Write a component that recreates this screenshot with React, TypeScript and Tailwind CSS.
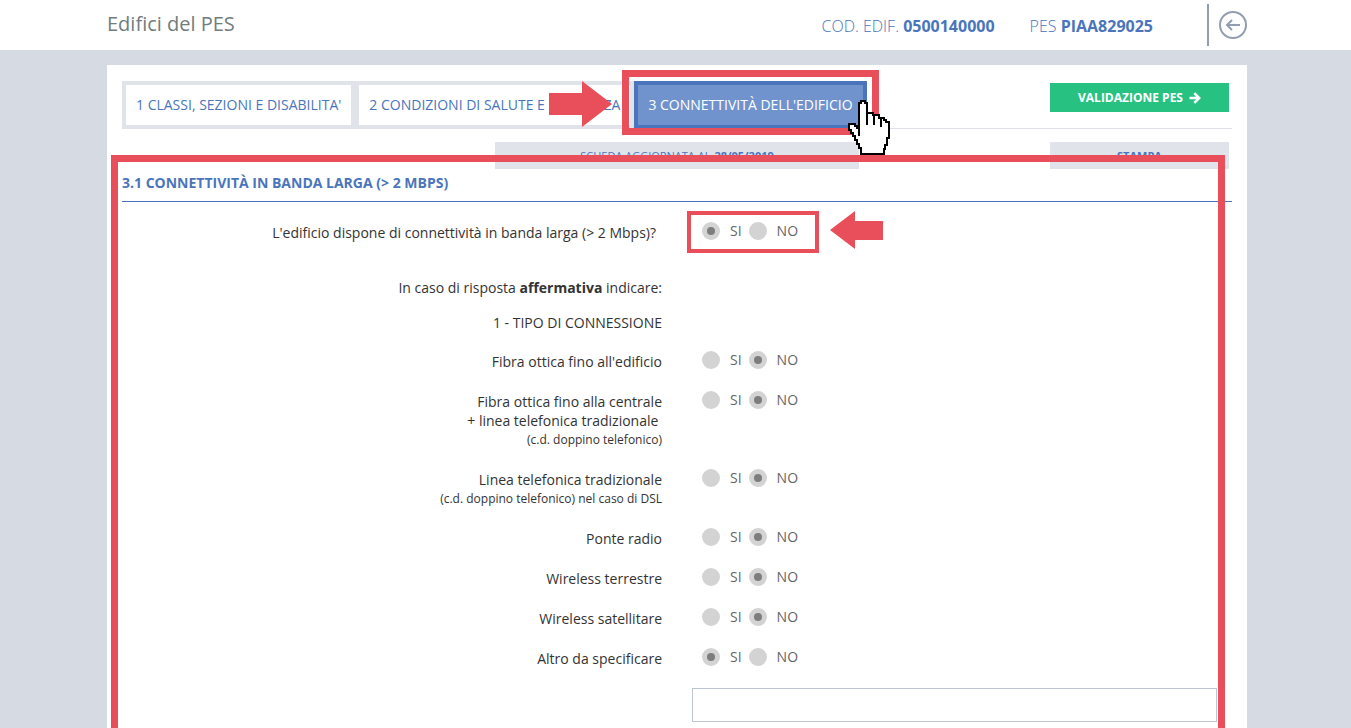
import { useState } from 'react';
import type { ReactNode } from 'react';

type Answer = 'SI' | 'NO';

interface Question {
  id: string;
  label: ReactNode;
  initial: Answer;
}

const connectionTypes: Question[] = [
  { id: 'fibra-edificio', label: "Fibra ottica fino all'edificio", initial: 'NO' },
  {
    id: 'fibra-centrale',
    label: (
      <>
        Fibra ottica fino alla centrale
        <br />+ linea telefonica tradizionale&nbsp;
        <span className="block text-xs leading-[19px]">(c.d. doppino telefonico)</span>
      </>
    ),
    initial: 'NO',
  },
  {
    id: 'linea-telefonica',
    label: (
      <>
        Linea telefonica tradizionale
        <span className="block text-xs leading-[19px]">(c.d. doppino telefonico) nel caso di DSL</span>
      </>
    ),
    initial: 'NO',
  },
  { id: 'ponte-radio', label: 'Ponte radio', initial: 'NO' },
  { id: 'wireless-terrestre', label: 'Wireless terrestre', initial: 'NO' },
  { id: 'wireless-satellitare', label: 'Wireless satellitare', initial: 'NO' },
  { id: 'altro', label: 'Altro da specificare', initial: 'SI' },
];

function YesNo({ id, initial }: { id: string; initial: Answer }) {
  const [value, setValue] = useState<Answer>(initial);

  return (
    <div role="radiogroup" aria-labelledby={`${id}-label`} className="flex h-[18px] items-center pl-2.5">
      {(['SI', 'NO'] as Answer[]).map((option) => (
        <label key={option} className="mr-[7px] flex items-center gap-2.5 text-sm leading-[18px] text-[#666]">
          <input
            type="radio"
            name={id}
            value={option}
            checked={value === option}
            onChange={() => setValue(option)}
            className="h-[18px] w-[18px] appearance-none rounded-full border-[5px] border-[#d3d3d3] bg-[#d3d3d3] checked:bg-[#7d7d7d]"
          />
          {option}
        </label>
      ))}
    </div>
  );
}

function QuestionRow({ question, highlighted }: { question: Question; highlighted?: boolean }) {
  return (
    <div className="grid grid-cols-2 py-2.5">
      <div
        id={`${question.id}-label`}
        className={`pt-px text-right text-sm leading-[19px] ${highlighted ? 'pr-[21px]' : 'pr-[15px]'}`}
      >
        {question.label}
      </div>
      <div className="pl-[15px]">
        <div className="relative w-fit">
          <YesNo id={question.id} initial={question.initial} />
          {highlighted && (
            <>
              <div className="pointer-events-none absolute -top-[11px] -left-[5px] h-[42px] w-[132px] border-4 border-[#e84f5b]" />
              <svg
                viewBox="0 0 53 38"
                className="pointer-events-none absolute -top-[11px] left-[138px] h-[38px] w-[53px] fill-[#e84f5b]"
              >
                <path d="M0 19L25 0V10H53V29H25V38Z" />
              </svg>
            </>
          )}
        </div>
      </div>
    </div>
  );
}

function HandPointer() {
  return (
    <svg
      viewBox="0 0 43 55"
      fill="none"
      stroke="#000"
      strokeWidth="2.2"
      shapeRendering="crispEdges"
      className="pointer-events-none absolute top-[19px] -right-6 z-20 h-[55px] w-[43px]"
    >
      <path
        fill="#fff"
        d="M12 3H13V1H17V3H19V13H25V15H31V18H36V20H38V22H41V38H39V45H37V49H36V54H13V48H11V44H9V40H7V36H5V33H3V30H1V24H7V26H9V28H11V3Z"
      />
      <path d="M19 13V25M26 15V25M33 18V27M11 26V36" />
    </svg>
  );
}

export default function App() {
  const [other, setOther] = useState('');

  return (
    <div className="flex min-h-screen flex-col overflow-hidden bg-[#d6dae3] font-['Open_Sans',sans-serif] text-[#333]">
      <header className="bg-white pl-[3px]">
        <div className="mx-auto flex h-[50px] w-full max-w-[1140px] items-center justify-between">
          <h1 className="pb-0.5 text-xl text-[#717d7d]">Edifici del PES</h1>
          <div className="flex items-center text-[#4a75bc]">
            <p className="mr-[35px] pt-0.5 text-base font-light">
              COD. EDIF. <strong className="font-bold">0500140000</strong>
            </p>
            <p className="mr-[54px] pt-0.5 text-base font-light">
              PES <strong className="font-bold">PIAA829025</strong>
            </p>
            <a href="#indietro" aria-label="Indietro" className="flex h-[42px] items-center border-l-2 border-[#939db0] pl-2.5">
              <svg viewBox="0 0 28 28" fill="none" stroke="#939db0" strokeWidth="2" className="h-7 w-7">
                <circle cx="14" cy="14" r="13" />
                <path d="M21 14H8M13 9L8 14L13 19" />
              </svg>
            </a>
          </div>
        </div>
      </header>

      <div className="flex flex-1 flex-col pt-[15px] pl-[3px]">
        <main className="relative mx-auto w-full max-w-[1140px] flex-1 bg-white pt-4">
          <div className="mx-[15px] flex h-12 items-start justify-between border-b border-[#dcdfe9]">
            <nav className="flex h-12 text-sm whitespace-nowrap text-[#4a75bc]">
              <a href="#classi" className="flex items-center border-4 border-[#e0e4ea] bg-white px-2.5">
                1 CLASSI, SEZIONI E DISABILITA'
              </a>
              <a href="#condizioni" className="flex items-center border-4 border-[#e0e4ea] bg-white px-2.5">
                2 CONDIZIONI DI SALUTE E SICUREZZA
              </a>
              <div className="relative flex">
                <a
                  href="#connettivita"
                  aria-current="page"
                  className="flex items-center border-4 border-[#4a75bc] bg-[#7093cd] px-2.5 text-white"
                >
                  3 CONNETTIVITÀ DELL'EDIFICIO
                </a>
                <div className="pointer-events-none absolute -top-[11px] -right-3 -bottom-[6px] -left-3 border-[7px] border-[#e84f5b]" />
                <svg
                  viewBox="0 0 63 46"
                  className="pointer-events-none absolute top-0 -left-[85px] h-[46px] w-[63px] fill-[#e84f5b]"
                >
                  <path d="M63 23L33 0V12H0V34H33V46Z" />
                </svg>
                <HandPointer />
              </div>
            </nav>
            <button
              type="button"
              className="mt-0.5 mr-[3px] flex h-[29px] w-[179px] items-center justify-center gap-1.5 bg-[#27c282] text-xs font-bold text-white"
            >
              VALIDAZIONE PES
              <svg viewBox="0 0 12 12" fill="none" stroke="currentColor" strokeWidth="2.6" className="h-3 w-3">
                <path d="M0.500 6H10M5.300 1.200L10.100 6L5.300 10.800" />
              </svg>
            </button>
          </div>

          <div className="mx-[15px] mt-[13px] grid grid-cols-[1fr_364px_1fr] text-[11px] text-[#4a75bc]">
            <p className="col-start-2 flex h-[27px] items-center justify-center gap-1 bg-[#e0e4ea] pt-0.5">
              SCHEDA AGGIORNATA AL <strong>28/05/2019</strong>
            </p>
            <button type="button" className="mr-[3px] h-[27px] w-[179px] justify-self-end bg-[#e0e4ea] pt-0.5 font-bold">
              STAMPA
            </button>
          </div>

          <section>
            <h2 className="mx-[15px] mt-1 border-b border-[#4a75bc] pb-2 text-sm font-bold text-[#4a75bc]">
              3.1 CONNETTIVITÀ IN BANDA LARGA (&gt; 2 MBPS)
            </h2>

            <form className="pt-2.5">
              <QuestionRow
                highlighted
                question={{
                  id: 'banda-larga',
                  label: "L'edificio dispone di connettività in banda larga (> 2 Mbps)?",
                  initial: 'SI',
                }}
              />
              <div className="grid grid-cols-2 pt-[26px] pb-[9px] text-right text-sm leading-[19px]">
                <p className="pr-[15px]">
                  In caso di risposta <strong>affermativa</strong> indicare:
                </p>
                <p className="col-start-1 pt-4 pr-[15px]">1 - TIPO DI CONNESSIONE</p>
              </div>

              {connectionTypes.map((question) => (
                <QuestionRow key={question.id} question={question} />
              ))}

              <div className="grid grid-cols-2 pt-2.5">
                <div className="col-start-2 pr-[30px] pl-[15px]">
                  <input
                    type="text"
                    aria-label="Altro da specificare"
                    value={other}
                    onChange={(e) => setOther(e.target.value)}
                    className="block h-[34px] w-full border border-[#bcc5d1] bg-white px-3 text-sm"
                  />
                </div>
              </div>
            </form>
          </section>

          {/* frame around the section, runs past the bottom edge */}
          <div className="pointer-events-none absolute top-[90px] right-[22px] -bottom-[7px] left-1 z-10 border-[7px] border-[#e84f5b]" />
        </main>
      </div>
    </div>
  );
}
